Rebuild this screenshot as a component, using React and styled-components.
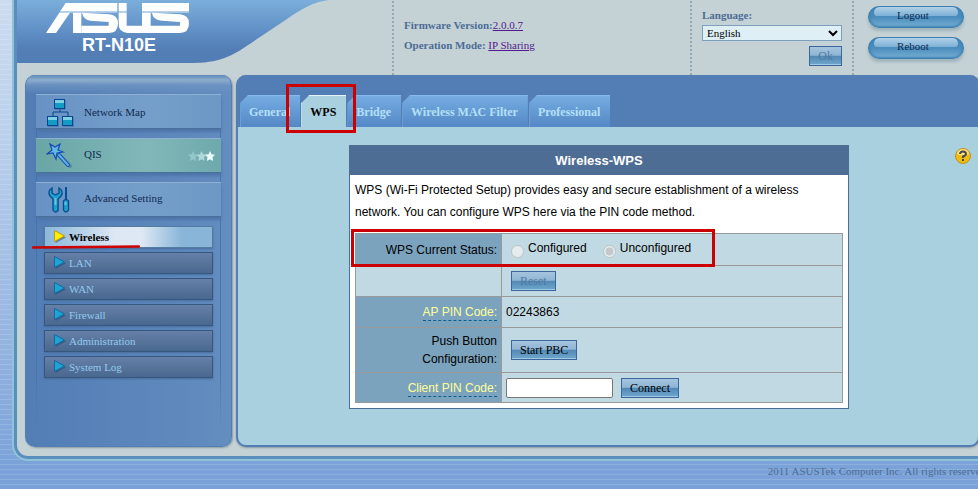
import React from "react";
import styled, { createGlobalStyle, css } from "styled-components";

const serif = `"Liberation Serif", "Times New Roman", serif`;
const sans = `"Liberation Sans", Arial, sans-serif`;

const GlobalStyle = createGlobalStyle`
  *, *::before, *::after { box-sizing: border-box; }
  body { margin: 0; font: 11px/16px ${serif}; color: #0f2a52; }
  ul { list-style: none; margin: 0; padding: 0; }
  a { color: inherit; text-decoration: none; }
`;

const Page = styled.div`
  min-height: 100vh;
  overflow: hidden;
  padding-left: 12px;
  background:
    repeating-linear-gradient(to bottom, transparent 0 4px, rgba(255, 255, 255, 0.14) 4px 5px),
    linear-gradient(to bottom, #ccdcf0, #b8cfeb 150px, #8fb0df 370px, #7aa2d8 470px);
`;

const Shell = styled.div`
  margin-right: -15px;
  border: 2px solid #8fc3d8;
  border-top: 0;
  border-radius: 0 0 16px 16px;
  background: #c4d1d5;
`;

const ShellInner = styled.div`
  border: 3px solid #5a8fbd;
  border-top: 0;
  border-radius: 0 0 14px 14px;
`;

const Header = styled.header`
  display: grid;
  grid-template-columns: 375px minmax(0, 1fr) 162px 136px;
  min-height: 75px;
`;

const Brand = styled.div`
  position: relative;
  color: #fff;
`;

const BannerShape = styled.svg`
  position: absolute;
  left: 0;
  top: 0;
`;

const BrandContent = styled.div`
  position: relative;
  display: flex;
  flex-direction: column;
  gap: 2px;
  padding: 3px 0 0 29px;
`;

const Model = styled.strong`
  padding-left: 36px;
  font: bold 18px/20px ${sans};
`;

const HeaderCell = styled.div`
  padding-left: 9px;
  background: repeating-linear-gradient(to bottom, transparent 0 1px, #93a9b3 1px 3px, transparent 3px 4px)
    0 0 / 2px 100% no-repeat;
`;

const Info = styled(HeaderCell)`
  padding: 15px 0 0 12px;
  line-height: 20px;
  color: #4d6d95;
`;

const InfoLink = styled.a`
  color: #551a8b;
  text-decoration: underline;
`;

const LanguageCell = styled(HeaderCell)`
  display: flex;
  flex-direction: column;
  align-items: flex-end;
  gap: 5px;
  padding: 6px 10px 0 12px;
`;

const LanguageField = styled.label`
  display: block;
  width: 100%;
  padding-top: 1px;
  font-weight: bold;
  color: #4d6d95;
`;

const Select = styled.select`
  display: block;
  width: 100%;
  height: 16px;
  margin-top: 2px;
  padding: 0;
  border: 1px solid #7d9fbd;
  border-radius: 0;
  background: #deeff6;
  font: 11px ${serif};
  color: #000;
`;

const Actions = styled(HeaderCell)`
  display: flex;
  flex-direction: column;
  gap: 9px;
  padding: 6px 0 0 16px;
`;

const Pill = styled.button`
  position: relative;
  width: 96px;
  height: 22px;
  padding: 0 6px 5px 0;
  border: 1px solid #3d7fae;
  border-radius: 11px;
  background: linear-gradient(to bottom, #4488b9, #4a8dbd 50%, #77aed2);
  box-shadow: 0 3px 3px #9fb4bd, inset 0 0 2px 1px #4185b6;
  font: 11px/16px ${serif};
  color: #0f2a52;
  &::before {
    content: "";
    position: absolute;
    inset: 0 5px 11px;
    border-radius: 6px 6px 4px 4px;
    background: linear-gradient(to bottom, #b2d1e7, #7cb0d5);
  }
`;

const PillText = styled.span`
  position: relative;
`;

const Columns = styled.div`
  display: grid;
  grid-template-columns: 207px minmax(0, 1fr);
  gap: 4px;
  padding: 0 8px 9px;
`;

const Sidebar = styled.nav`
  padding: 19px 10px 16px;
  border: 1px solid #527fb6;
  border-top: 0;
  border-radius: 10px;
  background:
    linear-gradient(to bottom, #5e8abd, #8dadcc 5px, rgba(110, 149, 193, 0.8) 10px, rgba(82, 125, 181, 0) 19px),
    linear-gradient(to right, #527db5, #648dc0);
  box-shadow: 1px 1px 2px #8b9ba3;
`;

const SidebarBody = styled.div`
  height: 100%;
  background:
    linear-gradient(to bottom, #4675a8 80%, transparent) 0 0 / 1px 100% no-repeat,
    linear-gradient(to bottom, #4675a8 80%, transparent) 100% 0 / 1px 100% no-repeat;
`;

const MainMenu = styled.ul`
  display: grid;
  gap: 9px;
`;

const MainItem = styled.a`
  display: flex;
  align-items: center;
  gap: 10px;
  height: 35px;
  padding: 0 6px 0 10px;
  border-top: 1px solid #8db0d3;
  border-bottom: 1px solid #496f9a;
  background: ${({ $green }) =>
    $green
      ? "linear-gradient(to right, #6aa6a6, #82b7b8 60%, #6ea9ad)"
      : "linear-gradient(to right, #6892c4, #759fca 60%, #6c98c6)"};
  box-shadow: 0 3px 3px #4c75a8;
`;

const MainLabel = styled.span`
  flex: 1;
  padding-bottom: ${({ $raised }) => ($raised ? "4px" : "0")};
`;

const SubMenu = styled.ul`
  display: grid;
  gap: 4px;
  padding: 9px 8px 0;
`;

const SubEntry = styled.li`
  position: relative;
`;

const SubItem = styled.a`
  display: flex;
  align-items: center;
  gap: 3px;
  height: 22px;
  padding: 0 8px 1px;
  border: 1px solid #36587f;
  box-shadow: 0 1px 2px #466d9a;
  background: linear-gradient(to bottom, #6680a8, #49688f);
  color: #92c9ee;
  ${({ $active }) =>
    $active &&
    css`
      border-color: #527ca0;
      background: linear-gradient(to right, #8ab7db, #dde8f4 42%, #dde8f4 58%, #88b5d8 82%);
      color: #000;
      font-weight: bold;
    `}
`;

const Main = styled.main`
  border: 2px solid #527db5;
  border-top: 0;
  border-radius: 10px;
  background: #a8d0df;
  box-shadow: 0 1px 2px #8b9ba3;
`;

const TabBar = styled.ul`
  display: flex;
  gap: 1px;
  padding: 20px 2px 0;
  border-radius: 8px 8px 0 0;
  background: #527db5;
`;

const TabEntry = styled.li`
  position: relative;
`;

const Tab = styled.a`
  display: block;
  height: 32px;
  padding: 1px 10px 0 8px;
  border-top: 1px solid ${({ $active }) => ($active ? "#e4f4f9" : "#85b9ea")};
  border-left: 1px solid ${({ $active }) => ($active ? "#d5ecf3" : "#6b9fd6")};
  background: ${({ $active }) => ($active ? "#a8d0df" : "linear-gradient(to bottom, #75ace1, #5488c6)")};
  clip-path: polygon(0 8px, 8px 0, 100% 0, 100% 100%, 0 100%);
  font: bold 12px/31px ${serif};
  color: ${({ $active }) => ($active ? "#000" : "#b4e0f7")};
`;

const Content = styled.div`
  display: grid;
  grid-template-columns: minmax(0, 1fr) 16px;
  padding: 18px 7px 36px 5px;
`;

const Panel = styled.section`
  justify-self: center;
  width: 100%;
  max-width: 500px;
  border: 1px solid #4d6d95;
  background: #fff;
  font: 12px/18px ${sans};
  color: #000;
`;

const PanelTitle = styled.h1`
  margin: 0;
  padding: 1px 0 0;
  background: #4d6d95;
  font: bold 13px/28px ${sans};
  color: #fff;
  text-align: center;
`;

const PanelBody = styled.div`
  padding: 4px 5px 5px;
`;

const Description = styled.p`
  margin: 0 0 10px;
  line-height: 22px;
`;

const TableArea = styled.div`
  position: relative;
`;

const Table = styled.table`
  width: 100%;
  border-collapse: collapse;
  background: #c0d9e2;
`;

const Row = styled.tr`
  height: ${({ $height }) => $height || 31}px;
`;

const cell = css`
  border: 1px solid #999;
  font-weight: normal;
`;

const NameCell = styled.th`
  ${cell}
  width: 146px;
  padding: 0 4px;
  background: ${({ $empty }) => ($empty ? "#c0d9e2" : "#7ba3bd")};
  background-clip: padding-box;
  text-align: right;
`;

const ValueCell = styled.td`
  ${cell}
  padding: 0 4px;
`;

const Hint = styled.a`
  display: inline-block;
  line-height: 16px;
  border-bottom: 1px dashed #0c6091;
  color: #ffff99;
`;

const Controls = styled.div`
  display: flex;
  align-items: center;
  gap: ${({ $gap }) => $gap || "8px"};
  padding-left: ${({ $indent }) => ($indent ? "5px" : "0")};
`;

const RadioLabel = styled.label`
  display: flex;
  gap: 4px;
  line-height: 14px;
`;

const Radio = styled.input`
  width: 13px;
  height: 13px;
  margin: 4px 0 0;
`;

const Button = styled.button`
  height: 20px;
  padding: 0 8px;
  border: 1px solid #3d669c;
  background: linear-gradient(to bottom, #a6c4de, #8fb5d4 47%, #5087b4 48%, #70a7cd);
  box-shadow: inset 0 -1px #9ec9e3;
  font: 12px/16px ${serif};
  color: #000;
  &:disabled { color: #527a9f; }
`;

const TextInput = styled.input`
  width: 107px;
  height: 20px;
  padding: 0 3px;
  border: 1px solid #767676;
  border-radius: 2px;
  background: #fff;
  font: 12px ${sans};
`;

const HelpButton = styled.button`
  width: 16px;
  height: 24px;
  padding: 0;
  border: 0;
  background: none;
`;

const MarkerBox = styled.span`
  position: absolute;
  inset: ${({ $inset }) => $inset};
  height: ${({ $height }) => $height || "auto"};
  z-index: 2;
  border: 3px solid #cc0000;
  pointer-events: none;
`;

const MarkerLine = styled.svg`
  position: absolute;
  left: -12px;
  bottom: -1px;
  z-index: 2;
`;

const Footer = styled.footer`
  margin-right: -11px;
  padding: 2px 0 10px;
  color: #4d6d95;
  text-align: right;
  white-space: nowrap;
`;

const AsusLogo = () => (
  <svg width="143" height="30" viewBox="138 9 429 90" fill="#fff" role="img" aria-label="ASUS">
    <path d="M197 9H352V33H181Z" />
    <path d="M181 33H352V38H178ZM356 33H380V38H356ZM426 33H567V38H426Z" opacity=".5" />
    <path d="M178 38H210L168 99H138ZM219 38H244V99H219Z" />
    <path d="M246 38L328 43Q354 46 354 70Q354 99 328 99H244V77H326V66L272 62Q250 60 246 38Z" />
    <path d="M356 9H380V33H356ZM356 38H380V77H426V99H382Q356 96 356 72ZM426 9H567V33H426ZM426 38H452V99H426Z" />
    <path d="M456 38L540 43Q567 46 567 70Q567 99 540 99H446V77H540V66L486 62Q458 60 456 38Z" />
  </svg>
);

const NetworkIcon = () => (
  <svg width="28" height="30" viewBox="0 0 28 30" aria-hidden="true">
    <path d="M14 11V15M7 19V15H22V19" fill="none" stroke="#0a458f" strokeWidth="1" />
    {[[8, 2], [1, 19], [16, 19]].map(([x, y]) => (
      <g key={`${x}-${y}`}>
        <rect x={x + 1} y={y + 1} width="11" height="10" fill="#426f9f" opacity=".6" />
        <rect x={x + 0.5} y={y + 0.5} width="10" height="9" fill="#149dc4" stroke="#0a458f" />
        <rect x={x + 1} y={y + 1} width="9" height="3" fill="#7fd0e2" />
      </g>
    ))}
  </svg>
);

const WandIcon = () => (
  <svg width="28" height="28" viewBox="0 0 28 28" aria-hidden="true">
    <path d="M13 13L23 23" stroke="#3e7788" strokeWidth="4" strokeLinecap="round" transform="translate(1 1)" opacity=".5" />
    <path d="M13 13L22 23" stroke="#164ab4" strokeWidth="4" strokeLinecap="round" />
    <path d="M13 13L22 23" stroke="#5cb3e3" strokeWidth="2" strokeLinecap="round" />
    <path d="M4 2L9 5L14 2L12 8L17 10L11 11L10 17L7 11L1 12L6 8Z" fill="#62b8e4" stroke="#164ab4" strokeWidth="1.2" />
  </svg>
);

const ToolsIcon = () => (
  <svg width="28" height="30" viewBox="0 0 28 30" aria-hidden="true">
    <path d="M6 3Q2 6 4 10L7 13V25Q9 28 12 25V13L15 10Q17 6 13 3V8L10 10L6 8Z" transform="translate(1 1)" fill="#365f91" opacity=".5" />
    <path d="M6 3Q1 6 4 11L7 14V25Q9.500 29 12 25V14L15 11Q18 6 13 3V8L9.500 10L6 8Z" fill="#1ca2cb" stroke="#0a4e92" strokeWidth="1.400" />
    <path d="M20 2V14" stroke="#0a4e92" strokeWidth="2" />
    <path d="M17.500 16Q20 13 22.500 16V25Q20 29 17.500 25Z" fill="#1ca2cb" stroke="#0a4e92" strokeWidth="1.400" />
    <path d="M9.500 13V20M19.500 17V20" stroke="#68c2dc" strokeWidth="2" />
  </svg>
);

const star = "M5 0L6.500 3.300L10 3.800L7.500 6.300L8.100 10L5 8.200L1.900 10L2.500 6.300L0 3.800L3.500 3.300Z";

const Stars = () => (
  <svg width="27" height="10" viewBox="0 0 27 10" aria-hidden="true">
    <path d={star} fill="#a9d6da" opacity=".6" />
    <path d={star} transform="translate(8.500)" fill="#bde3e8" opacity=".8" />
    <path d={star} transform="translate(17)" fill="#edffff" />
  </svg>
);

const Arrow = ({ active }) => (
  <svg width="13" height="15" viewBox="0 0 13 15" aria-hidden="true">
    <path d="M2.500 3L13 8.500L2.500 14Z" fill="#24496f" opacity=".5" />
    <path d="M1.500 1.500L11.500 7L1.500 12.500Z" fill={active ? "#fff100" : "#1ea4d4"} stroke={active ? "#bf9a13" : "#1469a1"} />
  </svg>
);

const HelpIcon = () => (
  <svg width="16" height="16" viewBox="0 0 16 16" aria-hidden="true">
    <circle cx="8" cy="8" r="7.500" fill="#edbd16" stroke="#c98c1a" />
    <path d="M2 6A6 5 0 0 1 14 6Q8 9 2 6Z" fill="#fff2a4" opacity=".7" />
    <path d="M5 6Q5 3.500 8 3.500Q11 3.500 11 6Q11 7.500 8 8.500V10" fill="none" stroke="#474a50" strokeWidth="2" />
    <rect x="7" y="11" width="2" height="2" fill="#474a50" />
  </svg>
);

const mainItems = [
  { label: "Network Map", Icon: NetworkIcon },
  { label: "QIS", Icon: WandIcon, green: true, raised: true },
  { label: "Advanced Setting", Icon: ToolsIcon, raised: true },
];
const subItems = ["Wireless", "LAN", "WAN", "Firewall", "Administration", "System Log"];
const tabs = ["General", "WPS", "Bridge", "Wireless MAC Filter", "Professional"];

export default function App() {
  return (
    <Page>
      <GlobalStyle />
      <Shell>
        <ShellInner>
          <Header>
            <Brand>
              <BannerShape width="316" height="64" viewBox="0 0 316 64" aria-hidden="true">
                <defs>
                  <linearGradient id="banner" x1="0" y1="0" x2="0" y2="1">
                    <stop offset="0" stopColor="#7baedb" />
                    <stop offset=".5" stopColor="#608fc5" />
                    <stop offset=".8" stopColor="#527db5" />
                  </linearGradient>
                </defs>
                <path d="M0 0H312C296 2 286 8 270 19L243 37C214 57 205 63 172 63H0Z" fill="url(#banner)" />
              </BannerShape>
              <BrandContent>
                <AsusLogo />
                <Model>RT-N10E</Model>
              </BrandContent>
            </Brand>
            <Info>
              <div><b>Firmware Version:</b><InfoLink href="#firmware">2.0.0.7</InfoLink></div>
              <div><b>Operation Mode:</b> <InfoLink href="#mode">IP Sharing</InfoLink></div>
            </Info>
            <LanguageCell>
              <LanguageField>
                Language:
                <Select defaultValue="English"><option>English</option></Select>
              </LanguageField>
              <Button disabled>Ok</Button>
            </LanguageCell>
            <Actions>
              <Pill><PillText>Logout</PillText></Pill>
              <Pill><PillText>Reboot</PillText></Pill>
            </Actions>
          </Header>
          <Columns>
            <Sidebar>
              <SidebarBody>
                <MainMenu>
                  {mainItems.map(({ label, Icon, green, raised }) => (
                    <li key={label}>
                      <MainItem href="#" $green={green}>
                        <Icon />
                        <MainLabel $raised={raised}>{label}</MainLabel>
                        {green && <Stars />}
                      </MainItem>
                    </li>
                  ))}
                </MainMenu>
                <SubMenu>
                  {subItems.map((label, i) => (
                    <SubEntry key={label}>
                      <SubItem href="#" $active={i === 0}>
                        <Arrow active={i === 0} />
                        {label}
                      </SubItem>
                      {i === 0 && (
                        <MarkerLine width="108" height="4" viewBox="0 0 108 4" aria-hidden="true">
                          <path d="M1 2.500L107 1.500" stroke="#cc0000" strokeWidth="2.500" strokeLinecap="round" />
                        </MarkerLine>
                      )}
                    </SubEntry>
                  ))}
                </SubMenu>
              </SidebarBody>
            </Sidebar>
            <Main>
              <TabBar>
                {tabs.map((label) => (
                  <TabEntry key={label}>
                    <Tab href="#" $active={label === "WPS"}>{label}</Tab>
                    {label === "WPS" && <MarkerBox $inset="-11px -10px -6px -15px" />}
                  </TabEntry>
                ))}
              </TabBar>
              <Content>
                <Panel>
                  <PanelTitle>Wireless-WPS</PanelTitle>
                  <PanelBody>
                    <Description>
                      WPS (Wi-Fi Protected Setup) provides easy and secure establishment of a wireless
                      network. You can configure WPS here via the PIN code method.
                    </Description>
                    <TableArea>
                      <Table>
                        <tbody>
                          <Row $height={32}>
                            <NameCell scope="row">WPS Current Status:</NameCell>
                            <ValueCell>
                              <Controls $indent $gap="16px">
                                <RadioLabel><Radio type="radio" name="status" disabled />Configured</RadioLabel>
                                <RadioLabel><Radio type="radio" name="status" disabled defaultChecked />Unconfigured</RadioLabel>
                              </Controls>
                            </ValueCell>
                          </Row>
                          <Row>
                            <NameCell as="td" $empty />
                            <ValueCell><Controls $indent><Button disabled>Reset</Button></Controls></ValueCell>
                          </Row>
                          <Row>
                            <NameCell scope="row"><Hint href="#ap-pin">AP PIN Code:</Hint></NameCell>
                            <ValueCell>02243863</ValueCell>
                          </Row>
                          <Row $height={45}>
                            <NameCell scope="row">Push Button<br />Configuration:</NameCell>
                            <ValueCell><Controls $indent><Button>Start PBC</Button></Controls></ValueCell>
                          </Row>
                          <Row $height={30}>
                            <NameCell scope="row"><Hint href="#client-pin" id="client-pin">Client PIN Code:</Hint></NameCell>
                            <ValueCell>
                              <Controls>
                                <TextInput type="text" aria-labelledby="client-pin" />
                                <Button>Connect</Button>
                              </Controls>
                            </ValueCell>
                          </Row>
                        </tbody>
                      </Table>
                      <MarkerBox $inset="-4px 128px auto -4px" $height="38px" />
                    </TableArea>
                  </PanelBody>
                </Panel>
                <HelpButton aria-label="Help"><HelpIcon /></HelpButton>
              </Content>
            </Main>
          </Columns>
        </ShellInner>
      </Shell>
      <Footer>2011 ASUSTek Computer Inc. All rights reserved.</Footer>
    </Page>
  );
}
